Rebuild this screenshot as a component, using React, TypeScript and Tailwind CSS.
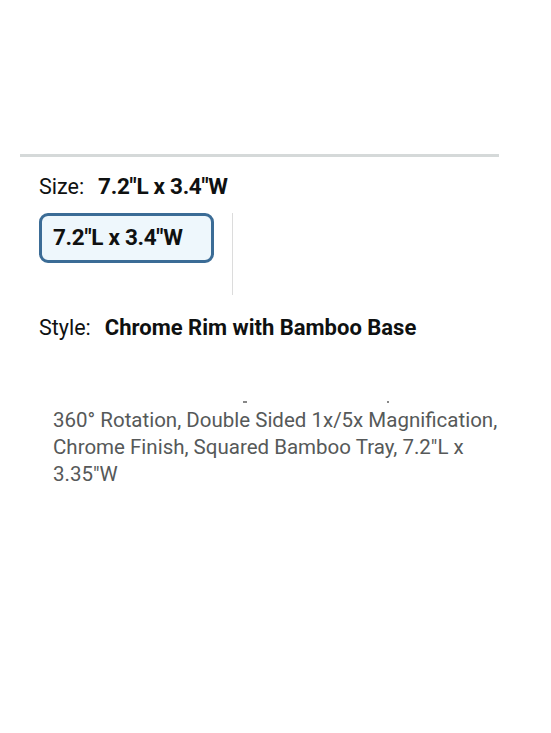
import React from 'react';

export default function App() {
  const font = { fontFamily: 'Roboto, "Noto Sans", sans-serif' };
  return (
    <div className="min-h-[733px] w-[551px] bg-white text-[#0f1111]" style={font}>
      <div className="pt-[154px]">
        <div className="ml-[20px] w-[479px] h-[3px] bg-[#d5d9d9]" />

        <div className="mt-[15px] ml-[39px] flex items-baseline gap-[14px] text-[21.5px] leading-[28px]">
          <span>Size:</span>
          <span className="font-bold text-[22.5px] tracking-[-0.3px]">7.2"L x 3.4"W</span>
        </div>

        <div className="mt-[12px] ml-[39px] flex">
          <button className="w-[175px] h-[50px] rounded-[9px] border-[3px] border-[#3b6c96] bg-[#eef7fc] text-left pl-[11px] text-[22.5px] font-bold tracking-[-0.3px]">
            7.2"L x 3.4"W
          </button>
          <div className="ml-[18px] w-[1px] h-[82px] bg-[#dcdcdc]" />
        </div>

        <div className="mt-[19px] ml-[39px] flex items-baseline gap-[14px] text-[21.5px] leading-[28px]">
          <span>Style:</span>
          <span className="font-bold text-[22px]">Chrome Rim with Bamboo Base</span>
        </div>

        <div className="mt-[59px] ml-[53px] relative h-[6px]">
          <span className="absolute left-[190px] top-0 w-[4px] h-[2px] bg-[#888]" />
          <span className="absolute left-[334px] top-0 w-[2px] h-[2px] bg-[#888]" />
        </div>

        <p className="mt-[0px] ml-[53px] w-[460px] text-[20.5px] leading-[27px] text-[#565959]">
          360° Rotation, Double Sided 1x/5x Magnification, Chrome Finish, Squared Bamboo Tray, 7.2"L x 3.35"W
        </p>
      </div>
    </div>
  );
}
